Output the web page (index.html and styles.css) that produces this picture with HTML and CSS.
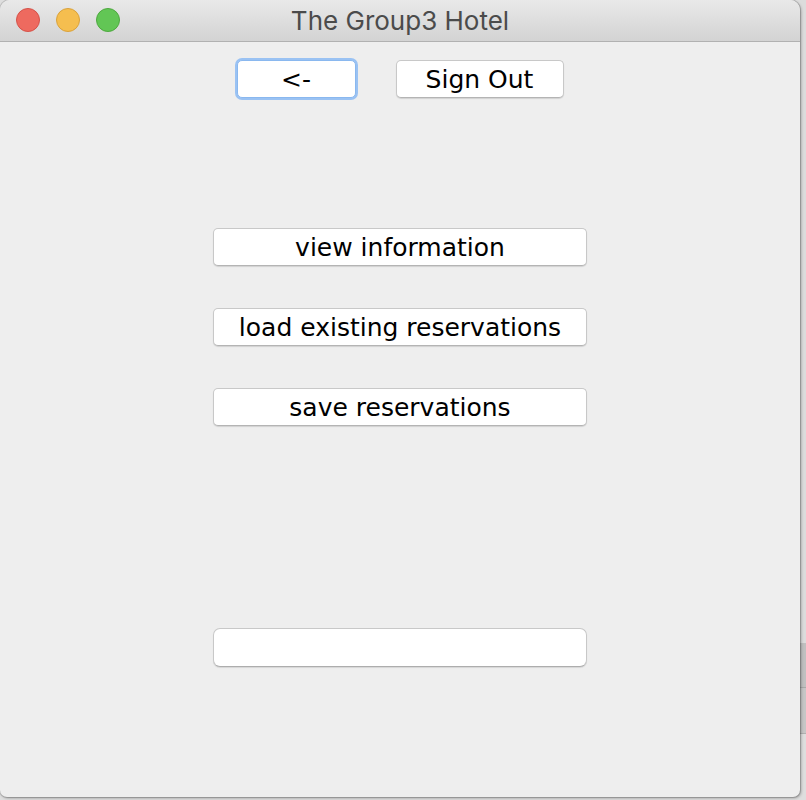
FILE: index.html
```html
<!DOCTYPE html>
<html lang="en">
<head>
<meta charset="utf-8">
<title>The Group3 Hotel</title>
<link rel="stylesheet" href="styles.css">
</head>
<body>
<div class="desktop">
  <div class="window">
    <div class="titlebar">
      <div class="lights">
        <span class="light red"></span>
        <span class="light yellow"></span>
        <span class="light green"></span>
      </div>
      <div class="title">The Group3 Hotel</div>
    </div>
    <div class="content">
      <div class="toprow">
        <button class="btn btn-back">&lt;-</button>
        <button class="btn btn-signout">Sign Out</button>
      </div>
      <div class="menu">
        <button class="btn btn-wide">view information</button>
        <button class="btn btn-wide">load existing reservations</button>
        <button class="btn btn-wide">save reservations</button>
      </div>
      <div class="field"></div>
    </div>
  </div>
  <div class="side">
    <div class="side-top"></div>
    <div class="band band-a"></div>
    <div class="band band-b"></div>
  </div>
</div>
</body>
</html>
```

FILE: styles.css
```css
html, body {
  margin: 0;
  padding: 0;
}
body {
  width: 806px;
  height: 800px;
  background: #dedede;
  overflow: hidden;
}
.desktop {
  display: flex;
  height: 800px;
}
.window {
  width: 800px;
  height: 797px;
  flex: none;
  background: #eeeeee;
  border-radius: 10px 10px 7px 7px;
  box-shadow: 0 0 0 1px rgba(0,0,0,0.12), 1px 1px 3px rgba(0,0,0,0.35);
  overflow: hidden;
  display: flex;
  flex-direction: column;
  position: relative;
  z-index: 1;
}
.titlebar {
  height: 41px;
  flex: none;
  background: linear-gradient(#e9e9e9, #d3d3d3);
  border-bottom: 1px solid #b1b1b1;
  display: flex;
  align-items: center;
  position: relative;
}
.lights {
  display: flex;
  gap: 16px;
  padding-left: 16px;
  position: absolute;
  left: 0;
  top: 8px;
}
.light {
  width: 24px;
  height: 24px;
  border-radius: 50%;
  box-sizing: border-box;
}
.red { background: #ee6a5f; border: 1px solid #d45249; }
.yellow { background: #f5be4f; border: 1px solid #d9a23c; }
.green { background: #62c655; border: 1px solid #4ea83f; }
.title {
  flex: 1;
  text-align: center;
  font-family: "Inter", "Liberation Sans", sans-serif;
  font-size: 26px;
  color: #4b4b4b;
  line-height: 41px;
}
.content {
  display: flex;
  flex-direction: column;
  align-items: center;
  padding-top: 18px;
}
.toprow {
  display: flex;
  gap: 40px;
}
.btn {
  font-family: "DejaVu Sans", "Liberation Sans", sans-serif;
  font-size: 25px;
  color: #000;
  background: #ffffff;
  border: 1px solid #c8c8c8;
  border-bottom-color: #b4b4b4;
  border-radius: 5px;
  box-shadow: 0 1px 1px rgba(0,0,0,0.12);
  height: 38px;
  padding: 2px 0 0;
  margin: 0;
  box-sizing: border-box;
  line-height: 34px;
  text-align: center;
  white-space: nowrap;
}
.btn-back {
  width: 119px;
  border-color: #8ab8ef;
  box-shadow: 0 0 0 2px #9ac2f3;
}
.btn-signout {
  width: 168px;
}
.menu {
  display: flex;
  flex-direction: column;
  gap: 42px;
  margin-top: 130px;
}
.btn-wide {
  width: 374px;
}
.field {
  width: 374px;
  height: 39px;
  margin-top: 202px;
  background: #fff;
  border: 1px solid #c8c8c8;
  border-bottom-color: #adadad;
  border-radius: 7px;
  box-sizing: border-box;
  box-shadow: 0 1px 1px rgba(0,0,0,0.1);
}
.side {
  flex: 1;
  display: flex;
  flex-direction: column;
}
.side-top {
  height: 643px;
  background: #dcdcdc;
}
.band-a {
  background: #c0c0c0;
  border-bottom: 1px solid #a9a9a9;
  height: 44px;
}
.band-b {
  height: 45px;
  background: #c6c6c6;
  border-bottom: 1px solid #b0b0b0;
}
```
